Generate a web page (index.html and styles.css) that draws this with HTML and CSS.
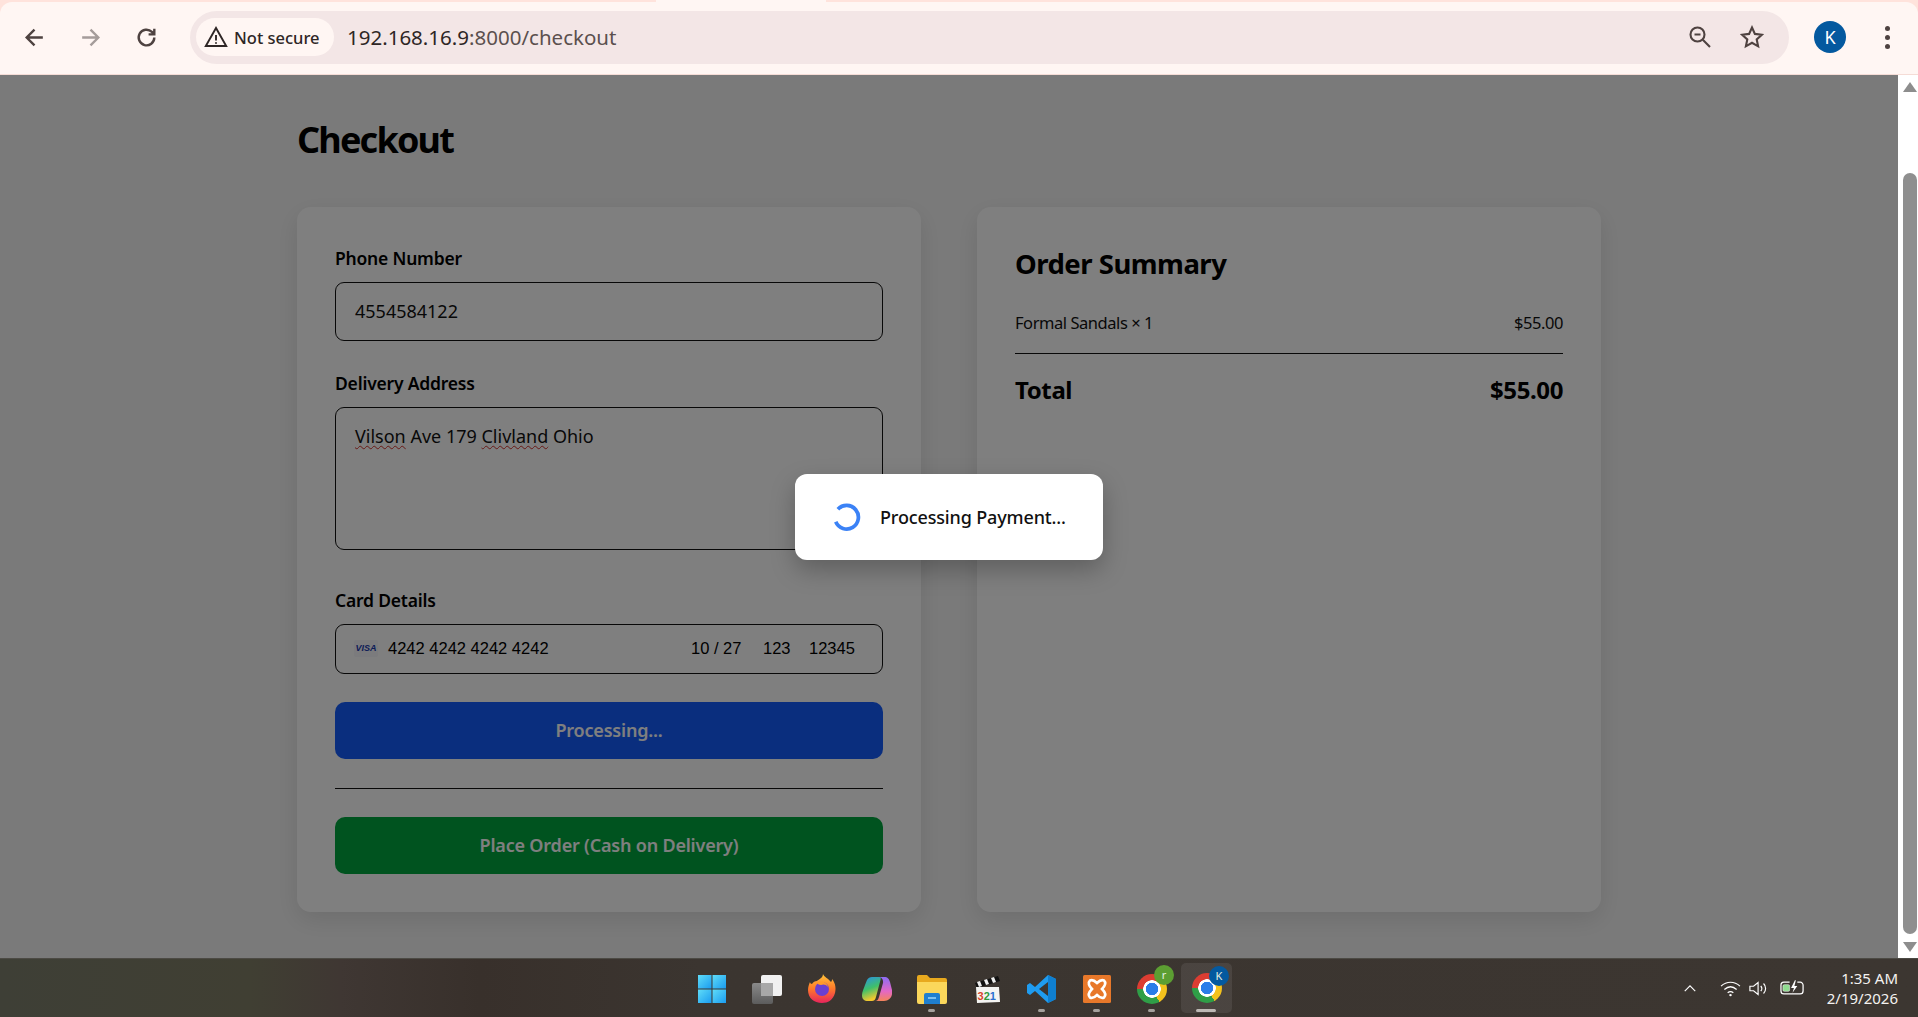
FILE: index.html
```html
<!DOCTYPE html>
<html lang="en">
<head>
<meta charset="utf-8">
<title>Checkout</title>
<link rel="stylesheet" href="styles.css">
</head>
<body>
<header class="chrome">
  <div class="tabstrip"><span class="tab-edge"></span></div>
  <div class="toolbar">
    <div class="nav">
      <svg class="nav-icon" viewBox="0 0 24 24"><path d="M20 12H5M12 4.500 4.500 12l7.500 7.500"/></svg>
      <svg class="nav-icon dim" viewBox="0 0 24 24"><path d="M4 12h15M12 4.500l7.500 7.500-7.500 7.500"/></svg>
      <svg class="nav-icon" viewBox="0 0 24 24"><path d="M19.500 12a7.500 7.500 0 1 1-2.300-5.400L19.500 9M19.500 3.500V9H14"/></svg>
    </div>
    <div class="omnibox">
      <div class="chip">
        <svg class="warn" viewBox="0 0 24 24"><path d="M12 3 1.800 21h20.400z"/><path d="M12 10v5.500M12 17.200v1.600"/></svg>
        <span>Not secure</span>
      </div>
      <div class="url"><span class="host">192.168.16.9</span>:8000/checkout</div>
      <svg class="omni-icon" viewBox="0 0 24 24"><circle cx="9.500" cy="9.500" r="7"/><path d="M6.500 9.500h6M14.800 14.800 22 22"/></svg>
      <svg class="omni-icon star" viewBox="0 0 24 24"><path d="m12 2.500 2.900 6.400 7 .8-5.200 4.700 1.400 6.900-6.100-3.500-6.100 3.500 1.400-6.900L2.100 9.700l7-.8z"/></svg>
    </div>
    <div class="avatar">K</div>
    <div class="kebab"><i></i><i></i><i></i></div>
  </div>
</header>

<div class="viewport">
  <main class="page">
    <h1 class="title">Checkout</h1>
    <div class="columns">
      <form class="card pay">
        <label class="label" for="phone">Phone Number</label>
        <input class="field phone" id="phone" value="4554584122">
        <label class="label gap-a">Delivery Address</label>
        <div class="field address"><span class="typo">Vilson</span> Ave 179 <span class="typo">Clivland</span> Ohio</div>
        <label class="label gap-b">Card Details</label>
        <div class="field stripe">
          <span class="visa">VISA</span>
          <span class="card-num">4242 4242 4242 4242</span>
          <span class="card-exp">10 / 27</span>
          <span class="card-cvc">123</span>
          <span class="card-zip">12345</span>
        </div>
        <div class="btn blue">Processing...</div>
        <hr class="rule">
        <div class="btn green">Place Order (Cash on Delivery)</div>
      </form>
      <section class="card summary">
        <h2 class="sum-title">Order Summary</h2>
        <div class="row line"><span>Formal Sandals × 1</span><span>$55.00</span></div>
        <hr class="rule sum-rule">
        <div class="row total"><span>Total</span><span>$55.00</span></div>
      </section>
    </div>
  </main>
  <aside class="scrollbar">
    <span class="arrow up"></span>
    <span class="thumb"></span>
    <span class="arrow down"></span>
  </aside>
  <div class="overlay">
    <div class="modal">
      <svg class="spinner" viewBox="0 0 28 28"><path d="M5.500 6.800A11 11 0 1 1 3.500 18.500"/></svg>
      <span class="modal-text">Processing Payment...</span>
    </div>
  </div>
</div>

<footer class="taskbar">
  <div class="tb-side"></div>
  <div class="tb-apps">
    <div class="app">
      <svg viewBox="0 0 30 30"><defs><linearGradient id="w" x1="0" y1="0" x2="1" y2="1"><stop offset="0" stop-color="#5fdcf8"/><stop offset="1" stop-color="#1a9cf0"/></linearGradient></defs><rect x="1" y="1" width="13.500" height="13.500" fill="url(#w)"/><rect x="15.500" y="1" width="13.500" height="13.500" fill="url(#w)"/><rect x="1" y="15.500" width="13.500" height="13.500" fill="url(#w)"/><rect x="15.500" y="15.500" width="13.500" height="13.500" fill="url(#w)"/></svg>
    </div>
    <div class="app">
      <svg viewBox="0 0 30 30"><defs><linearGradient id="tv" x1="0" y1="0" x2="0" y2="1"><stop offset="0" stop-color="#8a8a8a"/><stop offset="1" stop-color="#5c5c5c"/></linearGradient></defs><rect x="9" y="1" width="21" height="21" rx="2" fill="#f1f1f1"/><rect x="0" y="9" width="21" height="21" rx="2" fill="url(#tv)"/><rect x="9" y="9" width="12" height="13" fill="#a8a8a8"/></svg>
    </div>
    <div class="app">
      <svg viewBox="0 0 30 30"><defs><linearGradient id="ff" x1="0.500" y1="0" x2="0.500" y2="1"><stop offset="0" stop-color="#ffc53a"/><stop offset=".5" stop-color="#ff7a2a"/><stop offset="1" stop-color="#e6245c"/></linearGradient></defs><path d="M16 0c1 3 5 4 8 8 1-1 1-2 1-3 4 5 4 10 3 14-2 7-7 10-13 10C7 29 1 24 1 16c0-3 1-6 2-8 0 1 1 2 2 2 1-2 3-3 5-3 2-2 6-3 6-7z" fill="url(#ff)"/><circle cx="15" cy="15" r="7" fill="#6a3fd0"/><path d="M10 9c4-3 10-1 11 4-2-3-5-3-7-2-2 0-3-1-4-2z" fill="#ff9a2a"/></svg>
    </div>
    <div class="app">
      <svg viewBox="0 0 30 30"><defs><linearGradient id="c1" x1="0" y1="0" x2="0.300" y2="1"><stop offset="0" stop-color="#2a8fe8"/><stop offset=".55" stop-color="#3fc06a"/><stop offset="1" stop-color="#f5c82e"/></linearGradient><linearGradient id="c2" x1="0" y1="0" x2="0" y2="1"><stop offset="0" stop-color="#8c6cf4"/><stop offset=".6" stop-color="#e468c4"/><stop offset="1" stop-color="#f4845a"/></linearGradient></defs><path d="M10 3h7c2 0 2 1 1.500 3L14 23c-.8 3-2 4-4 4H6c-4 0-6-2-6-6 0-3 2-7 3-10l2-5c1-2 3-3 5-3z" fill="url(#c1)"/><path d="M16 3h6c4 0 5 2 6 5l2 8c1 6-2 11-8 11h-9c2 0 3-1 4-4l4-14c.500-3-1-6-5-6z" fill="url(#c2)"/></svg>
    </div>
    <div class="app on">
      <svg viewBox="0 0 30 30"><path d="M0 3a2 2 0 0 1 2-2h8l3 3h15a2 2 0 0 1 2 2v5H0z" fill="#e8a91e"/><path d="M0 8h30v20a2 2 0 0 1-2 2H2a2 2 0 0 1-2-2z" fill="#fbd75b"/><path d="M7 21a2 2 0 0 1 2-2h12a2 2 0 0 1 2 2v9H7z" fill="#1f7fd0"/><rect x="11" y="23" width="8" height="2" fill="#7cc0f0"/></svg>
    </div>
    <div class="app">
      <svg viewBox="0 0 30 30"><path d="M3 9 26 2l2 5-23 7z" fill="#111"/><path d="M5 8l3-1 2 5-3 1zM12 6l3-1 2 5-3 1zM19 4l3-1 2 5-3 1z" fill="#eee"/><path d="M4 13h23l1 15-23 1z" fill="#f4f4f2"/><text class="clap" x="5.500" y="26"><tspan fill="#d8442c">3</tspan><tspan fill="#2f9a3c">2</tspan><tspan fill="#2a6fd0">1</tspan></text></svg>
    </div>
    <div class="app on">
      <svg viewBox="0 0 30 30"><path d="M21 1 29 5v20l-8 4-13-12-5 4-3-2v-8l3-2 5 4z" fill="#1f9cf0"/><path d="M21 8 12 15l9 7z" fill="#3c3530"/><path d="M21 1l8 4v20l-8 4z" fill="#0f7fd0"/></svg>
    </div>
    <div class="app on">
      <svg viewBox="0 0 30 30"><rect x="1" y="1" width="28" height="28" rx="1.500" fill="#e8782a"/><path d="M8 6.500c3-1.500 5 .5 7 2.500 2-2 4-4 7-2.500 2.500 2.500 1 5.500-2 8.500 3 3 4.500 6 2 8.500-3 1.500-5-.5-7-2.500-2 2-4 4-7 2.500-2.500-2.500-1-5.500 2-8.500-3-3-4.500-6-2-8.500z" fill="none" stroke="#fff" stroke-width="2.600"/></svg>
    </div>
    <div class="app on">
      <span class="chrome-logo"></span>
      <span class="badge r">r</span>
    </div>
    <div class="app active">
      <span class="chrome-logo"></span>
      <span class="badge k">K</span>
    </div>
  </div>
  <div class="tb-side tray">
    <svg class="chev" viewBox="0 0 16 10"><path d="M2 8l6-6 6 6"/></svg>
    <svg class="wifi" viewBox="0 0 22 18"><path d="M1 6.500c6-5.500 14-5.500 20 0M4.500 10c4-3.500 9-3.500 13 0M8 13.500c2-1.500 4-1.500 6 0"/><circle cx="11" cy="16" r="1.300"/></svg>
    <svg class="vol" viewBox="0 0 22 18"><path d="M1 6.500h4l5-4v13l-5-4H1zM13 6c1.500 2 1.500 4 0 6M16 3.500c3 3 3 8 0 11"/></svg>
    <svg class="batt" viewBox="0 0 26 16"><path d="M10 2H4a3 3 0 0 0-3 3v6a3 3 0 0 0 3 3h17a3 3 0 0 0 3-3V5a3 3 0 0 0-3-3h-3" class="batt-line"/><rect x="3" y="4.500" width="7" height="7" rx="1.500" fill="#8fdc8f"/><path d="M15.500 0 11.500 8h3l-1.500 5 5-7h-3l1.500-6z" fill="#fff"/></svg>
    <div class="clock"><div>1:35 AM</div><div>2/19/2026</div></div>
  </div>
</footer>
</body>
</html>
```
FILE: styles.css
```css
* { box-sizing: border-box; }
html, body { margin: 0; height: 100%; overflow: hidden; }
body {
  display: flex;
  flex-direction: column;
  height: 1017px;
  font-family: "Noto Sans", "Open Sans", sans-serif;
  color: #000;
  background: #3c3530;
}

/* browser chrome */
.chrome { height: 75px; background: #ffe3dc; flex: none; border-bottom: 1px solid #f5dcd6; }
.tabstrip { height: 2px; position: relative; }
.tab-edge { position: absolute; left: 656px; width: 170px; height: 2px; background: #fff6f3; }
.toolbar {
  height: 72px;
  background: #fff6f3;
  border-radius: 12px 12px 0 0;
  display: flex;
  align-items: center;
  padding-bottom: 2px;
}
.nav { display: flex; width: 190px; padding-left: 22px; gap: 31px; align-items: center; flex: none; }
.nav-icon { width: 25px; height: 25px; fill: none; stroke: #4e4240; stroke-width: 2.300; }
.nav-icon.dim { stroke: #a59c9a; }
.omnibox {
  width: 1599px;
  height: 53px;
  background: #f3e6e6;
  border-radius: 27px;
  display: flex;
  align-items: center;
  padding: 0 25px 0 6px;
  flex: none;
}
.chip {
  width: 138px;
  height: 38px;
  border-radius: 19px;
  background: #fff6f3;
  display: flex;
  align-items: center;
  gap: 6px;
  padding-left: 8px;
  font-size: 16.500px;
  font-weight: 500;
  color: #2e2625;
}
.warn { width: 24px; height: 24px; fill: none; stroke: #2e2625; stroke-width: 1.900; flex: none; }
.url { flex: 1; padding-left: 13px; font-size: 20.500px; color: #5b504e; }
.host { color: #2e2625; }
.omni-icon { width: 24px; height: 24px; fill: none; stroke: #4e4240; stroke-width: 2.100; margin-left: 28px; flex: none; }
.avatar {
  width: 32px; height: 32px; margin-left: 25px; border-radius: 50%;
  background: #04599f; color: #fff; font-size: 18px;
  display: flex; align-items: center; justify-content: center; flex: none;
}
.kebab { margin-left: 39px; display: flex; flex-direction: column; gap: 4px; }
.kebab i { width: 5px; height: 5px; border-radius: 50%; background: #4e4240; display: block; }

/* page */
.viewport { flex: 1; display: flex; position: relative; min-height: 0; background: #f5f5f5; }
.page { flex: 1; padding: 40px 297px 0; min-width: 0; }
.title { margin: 0 0 42px; font-size: 36px; line-height: 50px; font-weight: 700; letter-spacing: -1.800px; }
.columns { display: grid; grid-template-columns: 624px 624px; gap: 56px; }
.card {
  background: #fff;
  border-radius: 14px;
  padding: 39px 38px 38px;
  box-shadow: 0 8px 24px rgba(0,0,0,.1);
  height: 705px;
}
.label { display: block; font-size: 17.500px; line-height: 24px; font-weight: 600; margin-bottom: 12px; letter-spacing: -.2px; }
.gap-a { margin-top: 30px; }
.gap-b { margin-top: 38px; }
.field {
  display: block;
  width: 100%;
  border: 1.500px solid #111;
  border-radius: 9px;
  background: transparent;
  font-family: inherit;
  font-size: 18px;
  color: #111;
  padding: 0 19px;
  outline: none;
}
.phone { height: 59px; padding-bottom: 2px; }
.address { height: 143px; padding-top: 15px; line-height: 27px; }
.typo { text-decoration: underline wavy #d3322c 1px; text-underline-offset: 2px; }
.stripe {
  height: 50px;
  display: flex;
  align-items: center;
  padding-bottom: 1px;
  font-family: "Liberation Sans", Arial, sans-serif;
  font-size: 16.500px;
  color: #000;
}
.visa {
  width: 24px; height: 17px; flex: none; border-radius: 2px;
  background: #f6f6fa; text-align: center;
  font-size: 9px; line-height: 17px; font-weight: 700; font-style: italic; color: #1a3ab0;
  margin-left: -1px;
}
.card-num { margin-left: 10px; width: 303px; }
.card-exp { width: 72px; }
.card-cvc { width: 46px; }
.btn {
  height: 57px;
  margin-top: 28px;
  border-radius: 10px;
  display: flex;
  align-items: center;
  justify-content: center;
  padding-bottom: 1px;
  font-size: 18px;
  font-weight: 600;
  letter-spacing: -.2px;
  color: #fff;
}
.blue { background: #155dfc; }
.green { background: #00a63e; }
.rule { margin: 29px 0 0; border: 0; border-top: 1.500px solid #111; }
.sum-title { margin: 0; font-size: 27.500px; line-height: 36px; font-weight: 700; letter-spacing: -.5px; }
.row { display: flex; justify-content: space-between; }
.line { margin-top: 29px; font-size: 16.500px; line-height: 24px; letter-spacing: -.45px; color: #111; }
.sum-rule { margin-top: 18px; }
.total { margin-top: 18px; font-size: 24px; line-height: 36px; font-weight: 700; letter-spacing: -.4px; }

/* scrollbar */
.scrollbar { width: 20px; flex: none; background: #fff; display: flex; flex-direction: column; align-items: center; padding: 7px 0 6px 4px; }
.arrow { width: 0; height: 0; border-left: 7px solid transparent; border-right: 7px solid transparent; flex: none; }
.up { border-bottom: 10px solid #8d8d8d; }
.down { border-top: 10px solid #8d8d8d; }
.thumb { flex: 1; width: 14px; margin: 81px 0 8px; background: #8f8f8f; border-radius: 7px; }

/* overlay */
.overlay {
  position: absolute;
  top: 0; left: 0; bottom: 0;
  width: 1898px;
  background: rgba(0,0,0,.5);
  display: flex;
  align-items: flex-start;
  justify-content: center;
}
.modal {
  margin-top: 399px;
  width: 308px;
  height: 86px;
  background: #fff;
  border-radius: 12px;
  display: flex;
  align-items: center;
  padding-left: 37px;
  gap: 18px;
  box-shadow: 0 10px 25px rgba(0,0,0,.25);
}
.spinner { width: 30px; height: 30px; fill: none; stroke: #3b82f6; stroke-width: 3.500; flex: none; }
.modal-text { font-size: 18px; font-weight: 500; letter-spacing: -.15px; color: #111; }

/* taskbar */
.taskbar {
  height: 59px;
  flex: none;
  background: linear-gradient(90deg, #3e3f36 0, #403f33 250px, #3f3733 340px, #38302b 480px, #3b3530 700px, #3c3631 100%);
  display: grid;
  grid-template-columns: 1fr auto 1fr;
  border-top: 1px solid #4c4a44;
}
.tb-apps { display: flex; }
.app { width: 55px; height: 58px; display: flex; align-items: center; justify-content: center; position: relative; padding-top: 1px; }
.app > svg { width: 30px; height: 30px; }
.app.on::after, .app.active::after {
  content: ""; position: absolute; bottom: 5px; left: 24px; width: 7px; height: 3px;
  border-radius: 2px; background: #a5a19d;
}
.app.active { background: rgba(255,255,255,.08); border-radius: 5px; margin: 4px 2px 0; width: 51px; height: 50px; padding: 0 0 1px; }
.app.active::after { left: 15px; width: 20px; background: #bdb9b5; bottom: 1px; }
.chrome-logo {
  width: 30px; height: 30px; border-radius: 50%; display: block;
  background:
    radial-gradient(circle at center, #2b7de9 0 6px, #fff 6.500px 8.500px, transparent 9px),
    conic-gradient(from 30deg, #f4c21c 0 120deg, #2f9e47 120deg 240deg, #dc3d32 240deg 360deg);
}
.badge {
  position: absolute; width: 20px; height: 20px; border-radius: 50%;
  top: 6px; right: 5px; font-size: 11px; line-height: 20px; text-align: center; color: #e4f0e0;
}
.badge.r { background: #5c9e32; }
.badge.k { background: #04599f; top: 3px; right: 3px; }
.clap { font-family: "Liberation Sans", sans-serif; font-weight: 700; font-size: 11px; }

.tray { display: flex; align-items: center; justify-content: flex-end; padding-right: 20px; color: #fff; }
.tray svg { fill: none; stroke: #fff; stroke-width: 1.300; flex: none; }
.chev { width: 14px; height: 9px; margin-right: 23px; stroke-width: 2; }
.wifi { width: 21px; height: 17px; margin-right: 8px; }
.wifi circle { fill: #fff; stroke: none; }
.vol { width: 20px; height: 17px; margin-right: 11px; }
.batt { width: 25px; height: 16px; margin-right: 22px; }
.tray .batt path:not(.batt-line) { stroke: none; }
.tray .batt rect { stroke: #fff; stroke-width: .5; }
.clock { font-size: 15px; line-height: 20px; text-align: right; color: #f4f2f0; }
```
